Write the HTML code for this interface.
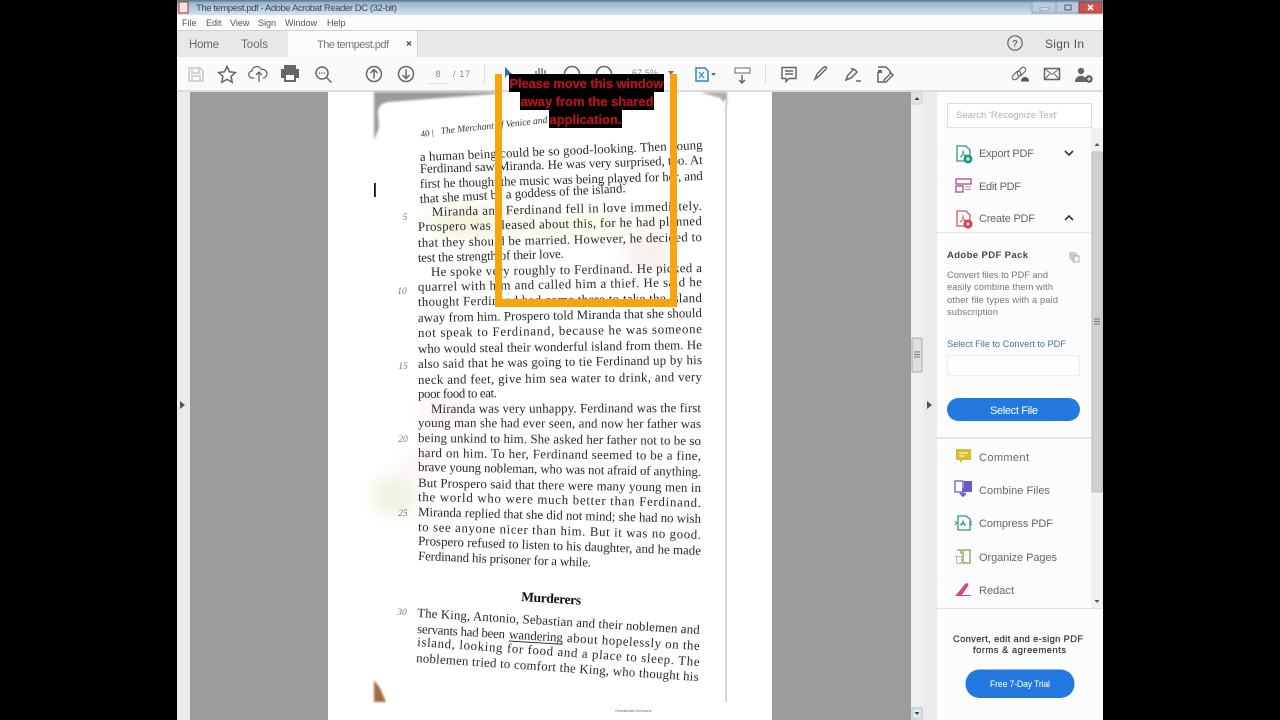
<!DOCTYPE html>
<html><head><meta charset="utf-8"><title>The tempest.pdf</title>
<style>
html,body{margin:0;padding:0;background:#000;width:1280px;height:720px;overflow:hidden}
svg{display:block}
text{font-family:"Liberation Sans",sans-serif}
.p text{font-family:"Liberation Serif",serif;font-size:12.9px;fill:#2a2a2a}
.n text{font-family:"Liberation Serif",serif;font-size:9.5px;font-style:italic;fill:#777;text-anchor:middle}
.ui{fill:#666;font-size:11px}
.d{fill:#777;font-size:9.3px}
.i{fill:none;stroke:#666;stroke-width:1.5}
</style></head><body>
<svg width="1280" height="720" viewBox="0 0 1280 720" xmlns="http://www.w3.org/2000/svg">
<defs>
<linearGradient id="tb" x1="0" y1="0" x2="0" y2="1"><stop offset="0" stop-color="#52758f"/><stop offset=".2" stop-color="#9db8cf"/><stop offset="1" stop-color="#d5e3ee"/></linearGradient>
<linearGradient id="edge" x1="0" y1="0" x2="1" y2="0"><stop offset="0" stop-color="#fff"/><stop offset="1" stop-color="#c4c4c4"/></linearGradient>
<filter id="b6" x="-60%" y="-60%" width="220%" height="220%"><feGaussianBlur stdDeviation="9"/></filter>
<filter id="b1"><feGaussianBlur stdDeviation="1"/></filter>
<filter id="t"><feGaussianBlur stdDeviation=".35"/></filter>
</defs>
<rect width="1280" height="720" fill="#000"/>
<!-- title -->
<rect x="177" y="0" width="926" height="15" fill="url(#tb)"/>
<rect x="179" y="2" width="9" height="11" fill="#f4e4e4" stroke="#b03030"/>
<text x="196" y="11" font-size="9.5" fill="#3d4a5a" textLength="201">The tempest.pdf - Adobe Acrobat Reader DC (32-bit)</text>
<rect x="1032" y="2" width="25" height="11" fill="#b7cbdc" stroke="#8ca4b8"/>
<rect x="1040" y="8" width="9" height="2" fill="#fff" stroke="#667" stroke-width=".5"/>
<rect x="1056" y="2" width="24" height="11" fill="#b7cbdc" stroke="#8ca4b8"/>
<rect x="1065" y="5" width="6" height="5" fill="none" stroke="#556" stroke-width="1"/>
<rect x="1079" y="2" width="23" height="11" fill="#c9554f" stroke="#97403c"/>
<path d="M1088 5l5 5m0-5l-5 5" stroke="#fff" stroke-width="1.6"/>
<!-- menu -->
<rect x="177" y="15" width="926" height="15" fill="#fbfcfd"/>
<g font-size="9" fill="#555">
<text x="182" y="26">File</text><text x="206" y="26">Edit</text><text x="230" y="26">View</text><text x="258" y="26">Sign</text><text x="285" y="26">Window</text><text x="327" y="26">Help</text>
</g>
<rect x="177" y="30" width="926" height="27" fill="#e8e8e8"/>
<rect x="177" y="30" width="926" height="1" fill="#d2d2d2"/>
<rect x="288" y="31" width="130" height="27" fill="#fbfbfb"/>
<rect x="417" y="31" width="1" height="26" fill="#d4d4d4"/>
<text x="189" y="48" font-size="11.5" fill="#6b6b6b" textLength="30">Home</text>
<text x="241" y="48" font-size="11.5" fill="#6b6b6b" textLength="27">Tools</text>
<text x="317" y="48" font-size="11" fill="#777" textLength="72">The tempest.pdf</text>
<path d="M407 41.5l4 4m0-4l-4 4" stroke="#555" stroke-width="1.4"/>
<circle cx="1015" cy="43" r="7.2" fill="none" stroke="#666" stroke-width="1.2"/>
<text x="1015" y="46.5" font-size="9.5" font-weight="bold" fill="#666" text-anchor="middle">?</text>
<text x="1045" y="48" font-size="12" fill="#555" textLength="39">Sign In</text>
<!-- toolbar -->
<rect x="177" y="57" width="926" height="34" fill="#fafafa"/>
<rect x="177" y="90" width="926" height="2" fill="#dcdcdc"/>
<g class="i">
<path d="M189 68h11l3 3v10h-14z M192 68v5h7v-5 M192 81v-5h8v5" stroke="#c8c8c8"/>
<path d="M227 66.5l2.5 5.3 5.8.7-4.2 4 1.1 5.800-5.200-2.900-5.200 2.900 1.100-5.800-4.200-4 5.800-.7z"/>
<path d="M254.500 78h-2a3.500 3.500 0 0 1-.5-7 5 5 0 0 1 9.500-1.500 3.800 3.800 0 0 1 2 8.500h-.5 M259 82v-10m-3 3l3-3 3 3" stroke-width="1.300"/>
<circle cx="322" cy="73" r="6"/><path d="M326.500 77.500l5 5"/>
<circle cx="374" cy="74" r="7.500"/><path d="M374 78.500v-9m-3.500 3.500l3.500-3.500 3.500 3.500"/>
<circle cx="406" cy="74" r="7.500"/><path d="M406 69.500v9m-3.500-3.500l3.500 3.500 3.500-3.500"/>
<path d="M536 80v-9m3 9v-12m3 12v-12m3 12v-10m-10 9h12" stroke="#777"/>
<circle cx="572" cy="74" r="7.500"/><circle cx="604" cy="74" r="7.500"/>
</g>
<path d="M284 69v-4h12v4h3v9h-3v4h-12v-4h-3v-9z" fill="#666"/><rect x="286" y="75" width="8" height="5" fill="#fff"/>
<circle cx="319.500" cy="73" r=".8" fill="#666"/><circle cx="322" cy="73" r=".8" fill="#666"/><circle cx="324.500" cy="73" r=".8" fill="#666"/>
<text x="438" y="77" font-size="9" fill="#888" text-anchor="middle">8</text>
<text x="453" y="77" font-size="9" fill="#888" textLength="17">/ 17</text>
<rect x="428" y="83" width="21" height="1" fill="#ddd"/>
<rect x="484" y="64" width="1" height="20" fill="#ddd"/>
<path d="M505 67l8 8h-6l-2 3z" fill="#2a70b0"/>
<text x="632" y="76" font-size="9" fill="#888" textLength="26">67.5%</text>
<path d="M668 71h6l-3 4z" fill="#777"/>
<!-- fit -->
<path d="M696 68h9l3 3v10h-12z" fill="#eef6fc" stroke="#2c86c4" stroke-width="1.500"/>
<path d="M699 72l5 6m0-6l-5 6" stroke="#2c86c4" stroke-width="1"/>
<path d="M711 73h5l-2.500 3z" fill="#666"/>
<rect x="735" y="68" width="15" height="5" fill="#fff" stroke="#666"/><path d="M742 75v8m-3-3l3 3 3-3" class="i"/>
<rect x="765" y="64" width="1" height="20" fill="#ddd"/>
<g class="i">
<path d="M782 67.500h14v11h-7l-3 3v-3h-4z M785 71h8M785 74h8"/>
<path d="M815 79l2-5 7-7c2-1 3 1 2 2l-7 7-4 3z"/>
<path d="M846 80l2-5 6-6 3 3-6 6-5 2z M851 68l2 2 M856 81h5"/>
<path d="M878 67h8l4 4v2 M878 72v10h7 M891 73l-7 7v2h2l7-7z"/>
<rect x="1011.500" y="73" width="10" height="5" rx="2.500" transform="rotate(-45 1016.500 75.500)" stroke-width="1.200"/>
<rect x="1016.500" y="69" width="10" height="5" rx="2.500" transform="rotate(-45 1021.500 71.500)" stroke-width="1.200"/>
<rect x="1044.500" y="68.500" width="15" height="11"/><path d="M1044.500 68.500l7.500 6 7.500-6M1044.500 79.500l5-5.500M1059.500 79.500l-5-5.500" stroke-width="1"/>
</g>
<rect x="878" y="70" width="4" height="3" fill="#666"/>
<path d="M1021 81.500c0-6 8-6 8 0z" fill="#555"/>
<circle cx="1081" cy="71" r="3.200" fill="#666"/><path d="M1075 82c0-8 11-8 11-2v2z" fill="#666"/>
<circle cx="1089" cy="79" r="3.700" fill="#555"/><path d="M1087 79h4m-2-2v4" stroke="#fff"/>
<!-- doc area -->
<rect x="177" y="92" width="14" height="628" fill="#ebebeb"/>
<rect x="190" y="92" width="721" height="628" fill="#9c9c9c"/>
<rect x="328" y="92" width="444" height="628" fill="#fff"/>
<path d="M180 401l5 4-5 4z" fill="#555"/>
<!-- scan decorations -->
<path d="M374 92H495V94L388 102Q378 104 378 112L379 128L374 140Z" fill="#9d9a97" filter="url(#b1)"/>
<path d="M700 92h27v14l-7-8z" fill="#b0adaa" filter="url(#b1)"/>
<rect x="374" y="183" width="1.800" height="14" fill="#111"/>
<rect x="724" y="100" width="3" height="602" fill="url(#edge)"/>
<path d="M374 680l6 8 6 14h-12z" fill="#a06a40" filter="url(#b1)"/>
<!-- stains -->
<ellipse cx="470" cy="222" rx="45" ry="16" fill="#f4f3dc" filter="url(#b6)"/>
<ellipse cx="575" cy="225" rx="90" ry="10" fill="#f8f7e8" filter="url(#b6)"/>
<ellipse cx="650" cy="255" rx="25" ry="22" fill="#f8f0ee" filter="url(#b6)"/>
<ellipse cx="445" cy="412" rx="24" ry="10" fill="#f9ebf3" filter="url(#b6)"/>
<ellipse cx="395" cy="495" rx="22" ry="20" fill="#eff0de" filter="url(#b6)"/>
<ellipse cx="420" cy="465" rx="18" ry="8" fill="#f9edf2" filter="url(#b6)"/>
<!-- page text -->
<g filter="url(#t)">
<text transform="translate(421 137) rotate(-7)" font-size="9" fill="#333" style="font-family:'Liberation Serif',serif">40 |</text>
<text transform="translate(441 134) rotate(-6)" font-size="9.500" font-style="italic" fill="#333" textLength="107" style="font-family:'Liberation Serif',serif">The Merchant of Venice and</text>
<g class="p">
<text transform="translate(420 161) rotate(-2.430)" textLength="283">a human being could be so good-looking. Then young</text>
<text transform="translate(420 173) rotate(-1.820)" textLength="283">Ferdinand saw Miranda. He was very surprised, too. At</text>
<text transform="translate(420 188) rotate(-1.620)" textLength="283">first he thought the music was being played for her, and</text>
<text transform="translate(420 203) rotate(-3)" textLength="206">that she must be a goddess of the island.</text>
<text transform="translate(432 216) rotate(-1.270)" textLength="270">Miranda and Ferdinand fell in love immediately.</text>
<text transform="translate(418 231) rotate(-1.200)" textLength="284">Prospero was pleased about this, for he had planned</text>
<text transform="translate(418 247) rotate(-1.200)" textLength="284">that they should be married. However, he decided to</text>
<text transform="translate(418 262) rotate(-1.600)" textLength="146">test the strength of their love.</text>
<text transform="translate(431 276) rotate(-.850)" textLength="271">He spoke very roughly to Ferdinand. He picked a</text>
<text transform="translate(418 291) rotate(-1)" textLength="284">quarrel with him and called him a thief. He said he</text>
<text transform="translate(418 306) rotate(-.800)" textLength="284">thought Ferdinand had come there to take the island</text>
<text transform="translate(418 322) rotate(-1)" textLength="284">away from him. Prospero told Miranda that she should</text>
<text transform="translate(418 337) rotate(-.800)" textLength="284">not speak to Ferdinand, because he was someone</text>
<text transform="translate(418 353) rotate(-.800)" textLength="284">who would steal their wonderful island from them. He</text>
<text transform="translate(418 368) rotate(-.800)" textLength="284">also said that he was going to tie Ferdinand up by his</text>
<text transform="translate(418 384) rotate(-.600)" textLength="284">neck and feet, give him sea water to drink, and very</text>
<text transform="translate(418 398) rotate(-.600)" textLength="79">poor food to eat.</text>
<text transform="translate(431 413) rotate(-.200)" textLength="270">Miranda was very unhappy. Ferdinand was the first</text>
<text transform="translate(418 427) rotate(.200)" textLength="283">young man she had ever seen, and now her father was</text>
<text transform="translate(418 442) rotate(.600)" textLength="283">being unkind to him. She asked her father not to be so</text>
<text transform="translate(418 457) rotate(.600)" textLength="283">hard on him. To her, Ferdinand seemed to be a fine,</text>
<text transform="translate(418 471) rotate(1)" textLength="283">brave young nobleman, who was not afraid of anything.</text>
<text transform="translate(418 487) rotate(1)" textLength="283">But Prospero said that there were many young men in</text>
<text transform="translate(418 501) rotate(1.200)" textLength="283">the world who were much better than Ferdinand.</text>
<text transform="translate(418 516) rotate(1.400)" textLength="283">Miranda replied that she did not mind; she had no wish</text>
<text transform="translate(418 531) rotate(1.600)" textLength="283">to see anyone nicer than him. But it was no good.</text>
<text transform="translate(418 545) rotate(2)" textLength="283">Prospero refused to listen to his daughter, and he made</text>
<text transform="translate(418 560) rotate(2.200)" textLength="173">Ferdinand his prisoner for a while.</text>
<text transform="translate(521 601) rotate(3.500)" textLength="60" font-weight="bold" style="font-size:13.5px;fill:#111">Murderers</text>
<text transform="translate(417 617) rotate(3.450)" textLength="283">The King, Antonio, Sebastian and their noblemen and</text>
<g transform="translate(417 633) rotate(3.450)">
<text x="0" y="0" textLength="88">servants had been</text>
<text x="92" y="0" textLength="54">wandering</text>
<text x="150" y="0" textLength="133">about hopelessly on the</text>
<rect x="92" y="2" width="54" height="1" fill="#333"/>
</g>
<text transform="translate(417 646) rotate(4.050)" textLength="283">island, looking for food and a place to sleep. The</text>
<text transform="translate(416 662) rotate(3.850)" textLength="283">noblemen tried to comfort the King, who thought his</text>
</g>
<g class="n">
<text x="405" y="220">5</text><text x="402" y="294">10</text><text x="403" y="369">15</text><text x="403" y="442">20</text><text x="403" y="516">25</text><text x="402" y="615">30</text>
</g>
<text x="615" y="712" font-size="4" fill="#888" textLength="37">Generated with CamScanner</text>
</g>
<!-- main scrollbar -->
<rect x="911" y="92" width="12" height="628" fill="#f0f0f0"/>
<rect x="912" y="93" width="10" height="11" fill="#e4e4e4" stroke="#cfcfcf"/>
<path d="M914.500 100l2.500-3 2.500 3z" fill="#444"/>
<rect x="912" y="708" width="10" height="11" fill="#dcebf2" stroke="#bbb"/>
<path d="M914.500 712l2.500 3 2.500-3z" fill="#444"/>
<rect x="912" y="338" width="10" height="34" rx="1" fill="#dedede" stroke="#aaa"/>
<path d="M914 352h6M914 354.500h6M914 357h6" stroke="#777"/>
<rect x="923" y="92" width="14" height="628" fill="#ebebeb"/>
<path d="M927 401l5 4-5 4z" fill="#555"/>
<!-- right panel -->
<rect x="937" y="92" width="166" height="628" fill="#fcfcfc"/>
<!-- right scrollbar -->
<rect x="1091" y="128" width="12" height="480" fill="#f1f1f1"/>
<path d="M1094.500 146l2.500-3 2.500 3z" fill="#555"/>
<rect x="1092" y="152" width="10.500" height="340" rx="1" fill="#cfcfcf" stroke="#bdbdbd"/>
<path d="M1094 319h6M1094 321.500h6M1094 324h6" stroke="#777"/>
<path d="M1094.500 600l2.500 3 2.500-3z" fill="#555"/>
<rect x="947.500" y="103.500" width="144" height="24" fill="#fff" stroke="#dedede"/>
<text x="956" y="118" font-size="9.500" fill="#b0b0b0" textLength="102">Search 'Recognize Text'</text>
<!-- export -->
<path d="M957 146h9l4 4v11h-13z" fill="#fff" stroke="#2e9688" stroke-width="1.300"/>
<path d="M960 157c2-1 3-4 3-7 0 3 1 5 4 6-3-1-5 0-7 1z" fill="none" stroke="#2e9688" stroke-width=".8"/>
<circle cx="968" cy="159" r="4.500" fill="#1f9a84"/><path d="M966 159h4m-2-2v4" stroke="#fff"/>
<text x="979" y="157" class="ui" textLength="55">Export PDF</text>
<path d="M1065 151l4 4 4-4" fill="none" stroke="#333" stroke-width="1.600"/>
<rect x="956" y="179" width="15" height="5" fill="#fff" stroke="#b04a82" stroke-width="1.300"/>
<rect x="956" y="186" width="7" height="6" fill="#fff" stroke="#b04a82" stroke-width="1.300"/>
<path d="M965 187h6M965 189.500h6" stroke="#999"/>
<text x="979" y="190" class="ui" textLength="42">Edit PDF</text>
<path d="M957 211h9l4 4v11h-13z" fill="#fff" stroke="#cf5a5a" stroke-width="1.300"/>
<path d="M960 222c2-1 3-4 3-7 0 3 1 5 4 6-3-1-5 0-7 1z" fill="none" stroke="#cf5a5a" stroke-width=".8"/>
<circle cx="968" cy="224" r="4.500" fill="#d83a50"/><path d="M966 224h4m-2-2v4" stroke="#fff"/>
<text x="979" y="222" class="ui" textLength="56">Create PDF</text>
<path d="M1065 220l4-4 4 4" fill="none" stroke="#333" stroke-width="1.600"/>
<rect x="937" y="232" width="154" height="1" fill="#e6e6e6"/>
<text x="947" y="258" font-size="9.500" font-weight="bold" fill="#444" textLength="81">Adobe PDF Pack</text>
<path d="M1069 252h6l4 4v6h-6l-4-4z" fill="#ccc"/><rect x="1074" y="256" width="5" height="6" fill="#fff" stroke="#aaa"/>
<text x="947" y="278" class="d" textLength="101">Convert files to PDF and</text>
<text x="947" y="290" class="d" textLength="106">easily combine them with</text>
<text x="947" y="303" class="d" textLength="111">other file types with a paid</text>
<text x="947" y="315" class="d" textLength="51">subscription</text>
<text x="947" y="347" font-size="9.300" fill="#4a7590" textLength="119">Select File to Convert to PDF</text>
<rect x="947.500" y="355.500" width="132" height="20" fill="#fdfdfd" stroke="#eee"/>
<rect x="947" y="398" width="133" height="23" rx="11.500" fill="#2479e0"/>
<text x="990" y="414" font-size="11" fill="#fff" textLength="48">Select File</text>
<rect x="937" y="437" width="154" height="2" fill="#e6e6e6"/>
<!-- tools -->
<path d="M956 449h15v11h-8l-3 3v-3h-4z" fill="#d8bc30"/><path d="M959 453h9M959 456h6" stroke="#fff"/>
<text x="979" y="461" class="ui" textLength="50">Comment</text>
<path d="M955 481h8v11h-8z" fill="#fff" stroke="#6a5ac8" stroke-width="1.300"/><path d="M964 481h8v11h-8z" fill="#6a5ac8"/><path d="M963 488v8m-3-3l3 3 3-3" fill="none" stroke="#6a5ac8" stroke-width="1.800"/>
<text x="979" y="494" class="ui" textLength="71">Combine Files</text>
<path d="M958 516h8l4 3v11h-12z" fill="#fff" stroke="#2e9688" stroke-width="1.300"/><path d="M955 521l2 2-2 2M972 521l-2 2 2 2M961 526l2-5 2 5M960 524h6" fill="none" stroke="#2e9688"/>
<text x="979" y="527" class="ui" textLength="74">Compress PDF</text>
<rect x="963" y="550" width="7" height="13" fill="#fff" stroke="#79a850" stroke-width="1.300"/>
<path d="M956.500 556.500h5v7h-5z" fill="none" stroke="#79a850" stroke-dasharray="1.500 1"/><path d="M957 550h4v4" fill="none" stroke="#79a850" stroke-width="1.300"/>
<text x="979" y="561" class="ui" textLength="78">Organize Pages</text>
<path d="M956 595l9-11c2-2 4 0 3 2l-6 9h9v1h-16z" fill="#d2498c"/>
<text x="979" y="594" class="ui" textLength="35">Redact</text>
<rect x="937" y="608" width="166" height="1" fill="#e2e2e2"/>
<text x="1018" y="642" font-size="9.300" fill="#333" text-anchor="middle" textLength="130" stroke="#333" stroke-width=".2">Convert, edit and e-sign PDF</text>
<text x="1019.500" y="653" font-size="9.300" fill="#333" text-anchor="middle" textLength="93" stroke="#333" stroke-width=".2">forms &amp; agreements</text>
<rect x="965.500" y="669.500" width="109" height="28.500" rx="14" fill="#2479e0"/>
<text x="990" y="687" font-size="8.800" fill="#fff" textLength="60">Free 7-Day Trial</text>
<!-- overlay -->
<rect x="495" y="74" width="7" height="233" fill="#f7a50f"/>
<rect x="670" y="74" width="7" height="233" fill="#f7a50f"/>
<rect x="495" y="299" width="182" height="8" fill="#f7a50f"/>
<rect x="509" y="74" width="155" height="18" fill="#000"/>
<rect x="520" y="92" width="134" height="18" fill="#000"/>
<rect x="549" y="110" width="73" height="18" fill="#000"/>
<g font-size="13" font-weight="bold" fill="#b3141a" stroke="#b3141a" stroke-width=".3">
<text x="509.500" y="88" textLength="154">Please move this window</text>
<text x="520.500" y="106" textLength="133">away from the shared</text>
<text x="549.500" y="124" textLength="72">application.</text>
</g>
</svg>
</body></html>
